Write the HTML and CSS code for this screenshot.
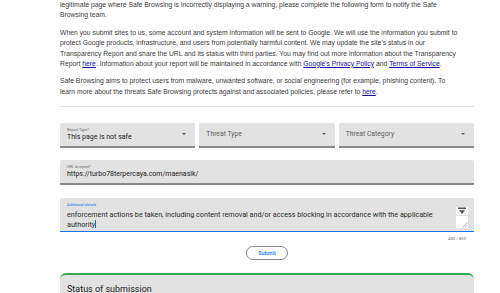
FILE: index.html
```html
<!DOCTYPE html>
<html lang="en">
<head>
  <meta charset="UTF-8" />
  <title>Report Incorrect Phishing Warning</title>
  <link rel="stylesheet" href="styles.css">
</head>
<body>
  <div class="page">
    <p class="intro">
      If you believe that Safe Browsing has classified a web page incorrectly, or you are the owner of a<br>
      legitimate page where Safe Browsing is incorrectly displaying a warning, please complete the following form to notify the Safe<br>
      Browsing team.
    </p>
    <p class="intro">
      When you submit sites to us, some account and system information will be sent to Google. We will use the information you submit to<br>
      protect Google products, infrastructure, and users from potentially harmful content. We may update the site's status in our<br>
      Transparency Report and share the URL and its status with third parties. You may find out more information about the Transparency<br>
      Report <a href="#">here</a>. Information about your report will be maintained in accordance with <a href="#">Google's Privacy Policy</a> and <a href="#">Terms of Service</a>.
    </p>
    <p class="intro">
      Safe Browsing aims to protect users from malware, unwanted software, or social engineering (for example, phishing content). To<br>
      learn more about the threats Safe Browsing protects against and associated policies, please refer to <a href="#">here</a>.
    </p>

    <hr class="divider">

    <form class="report-form">
      <div class="row three">
        <div class="field select">
          <div class="field-body">
            <span class="label">Report Type*</span>
            <span class="value">This page is not safe</span>
          </div>
          <span class="arrow"></span>
        </div>
        <div class="field select">
          <div class="field-body">
            <span class="placeholder">Threat Type</span>
          </div>
          <span class="arrow"></span>
        </div>
        <div class="field select">
          <div class="field-body">
            <span class="placeholder">Threat Category</span>
          </div>
          <span class="arrow"></span>
        </div>
      </div>

      <div class="field text">
        <div class="field-body">
          <span class="label">URL to report*</span>
          <span class="value">https://turbo78terpercaya.com/maenasik/</span>
        </div>
      </div>

      <div class="textarea-wrap">
        <div class="field area">
          <div class="field-body">
            <span class="label focus">Additional details</span>
            <span class="value">enforcement actions be taken, including content removal and/or access blocking in accordance with the applicable<br>authority<span class="caret"></span></span>
          </div>
          <div class="area-tools">
            <span class="tool">
              <svg width="10" height="8" viewBox="0 0 10 8"><rect x="1" y="0.5" width="8" height="1.6" fill="#555"/><path d="M2 3.3h6L5 7z" fill="#555"/></svg>
            </span>
            <span class="tool resize">
              <svg width="8" height="8" viewBox="0 0 8 8"><path d="M7.5 2.5L2.5 7.5M7.5 5L5 7.5" stroke="#777" stroke-width="0.6"/></svg>
            </span>
          </div>
        </div>
        <div class="counter">480 / 800</div>
      </div>

      <div class="actions">
        <button type="button" class="submit">Submit</button>
      </div>
    </form>

    <div class="status">
      <h2>Status of submission</h2>
    </div>
  </div>
</body>
</html>
```

FILE: styles.css
```css
* {
  box-sizing: border-box;
}

html, body {
  margin: 0;
  padding: 0;
  background: #ffffff;
  font-family: 'Liberation Sans', Arial, sans-serif;
  color: #333333;
}

.page {
  width: 414px;
  margin: -10px 0 0 60px;
}

.intro {
  font-size: 6.8px;
  line-height: 10.2px;
  margin: 0 0 7.5px 0;
  color: #3c3c3c;
  white-space: nowrap;
}

.intro a {
  color: #1a0dab;
  text-decoration: underline;
}

.divider {
  border: none;
  border-top: 1px solid #dcdcdc;
  margin: 9px 0 16px 0;
}

.report-form {
  display: flex;
  flex-direction: column;
  font-family: Roboto, 'Liberation Sans', sans-serif;
}

.row.three {
  display: grid;
  grid-template-columns: 1fr 1fr 1fr;
  gap: 4px;
  margin-bottom: 12px;
}

.field {
  background: #e2e2e2;
  border-bottom: 2px solid #8a8a8a;
  display: flex;
  align-items: center;
  padding: 0 7px;
  border-radius: 2px 2px 0 0;
}

.field.select,
.field.text {
  height: 25px;
}

.field-body {
  flex: 1;
  display: flex;
  flex-direction: column;
  justify-content: center;
  min-width: 0;
}

.label {
  font-size: 3.8px;
  color: #666666;
  line-height: 5px;
  margin-bottom: 1px;
}

.label.focus {
  color: #1a73e8;
  margin-bottom: 3px;
}

.value {
  font-size: 7px;
  color: #222222;
  line-height: 9px;
  white-space: nowrap;
}

.placeholder {
  font-size: 6.8px;
  color: #5f5f5f;
}

.arrow {
  width: 0;
  height: 0;
  border-left: 2px solid transparent;
  border-right: 2px solid transparent;
  border-top: 2px solid #555555;
  margin-right: 2px;
}

.field.text {
  margin-bottom: 13px;
}

.textarea-wrap {
  display: flex;
  flex-direction: column;
}

.field.area {
  align-items: stretch;
  height: 34px;
  border-bottom: 1.5px solid #1a73e8;
  padding: 4px 7px 3px 7px;
}

.field.area .field-body {
  justify-content: flex-start;
}

.field.area .value {
  font-size: 7.2px;
  line-height: 10px;
  color: #2a2a2a;
}

.caret {
  display: inline-block;
  width: 1px;
  height: 8px;
  background: #1a73e8;
  vertical-align: -1px;
}

.area-tools {
  display: flex;
  flex-direction: column;
  gap: 1px;
  margin-top: 5px;
  margin-right: -1px;
}

.tool {
  width: 12px;
  height: 8px;
  background: #ffffff;
  display: flex;
  align-items: center;
  justify-content: center;
}

.tool.resize {
  height: 14px;
  align-items: flex-end;
  justify-content: flex-end;
}

.counter {
  align-self: flex-end;
  font-size: 4.2px;
  line-height: 5px;
  color: #777777;
  margin: 4px 8px 0 0;
}

.actions {
  display: flex;
  justify-content: center;
  margin-top: 5px;
}

.submit {
  font-family: Roboto, 'Liberation Sans', sans-serif;
  font-size: 5.5px;
  font-weight: 500;
  color: #1a73e8;
  background: #ffffff;
  border: 1px solid #8a8a8a;
  border-radius: 8px;
  width: 42px;
  height: 14px;
  padding: 0;
}

.status {
  margin-top: 13px;
  background: #e2e2e2;
  border-top: 2px solid #34a853;
  border-radius: 6px 6px 0 0;
  height: 40px;
  padding: 9px 7px;
}

.status h2 {
  margin: 0;
  font-family: Roboto, 'Liberation Sans', sans-serif;
  font-weight: 400;
  font-size: 9px;
  color: #222222;
}
```
